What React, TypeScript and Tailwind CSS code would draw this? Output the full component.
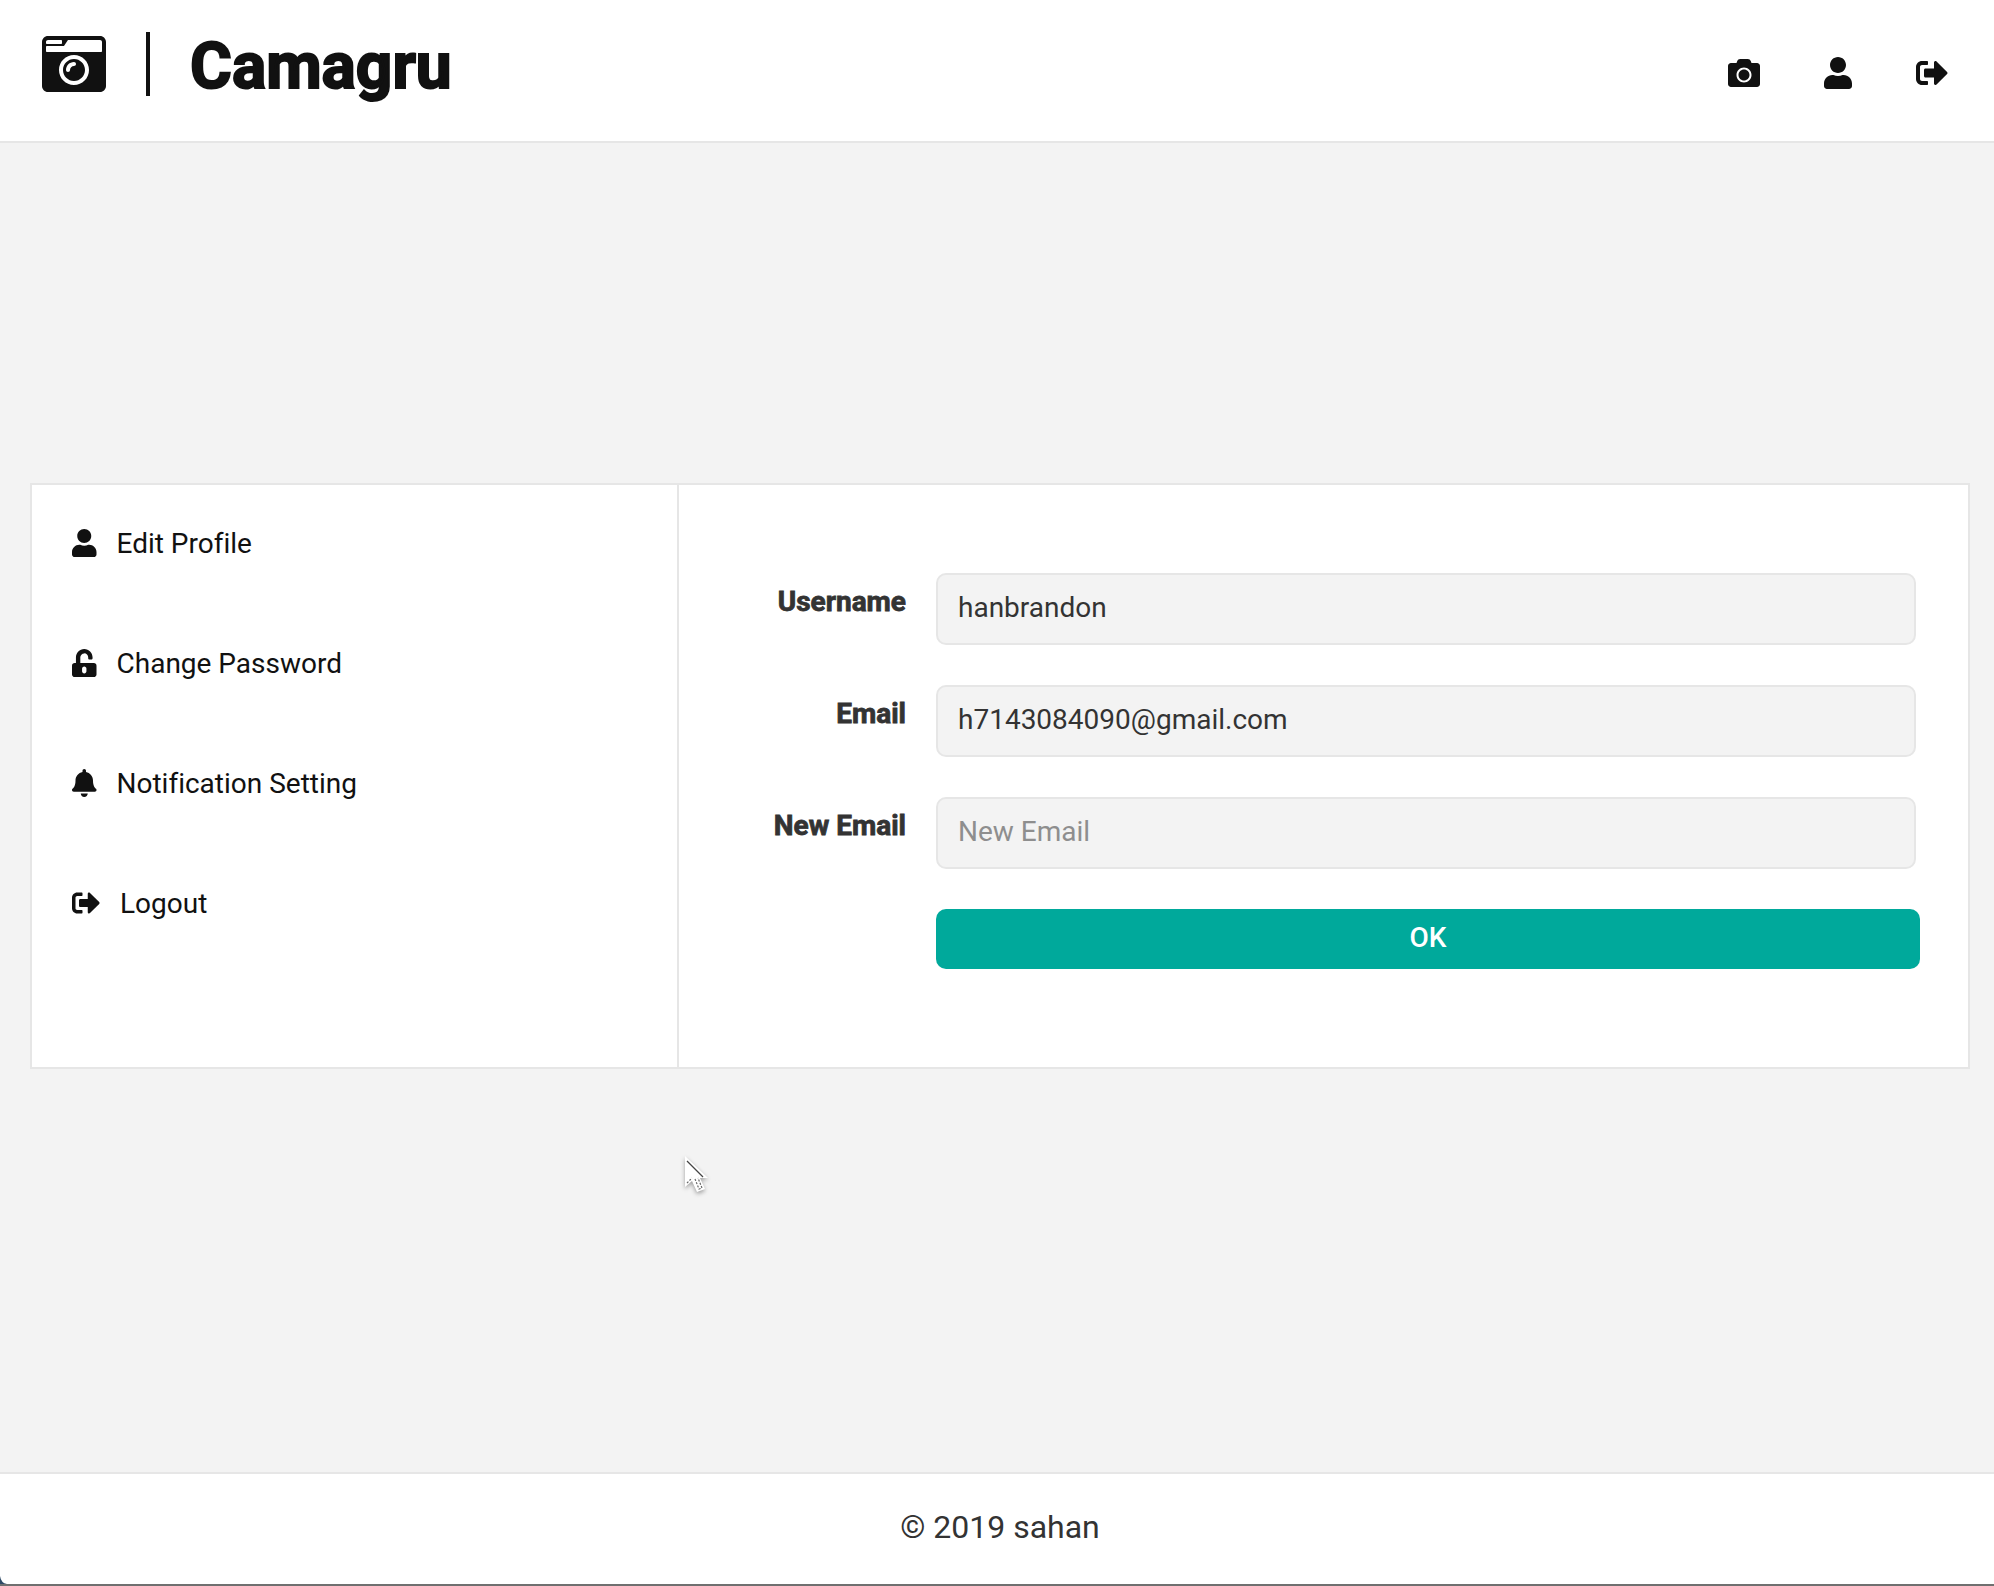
import type { ReactNode } from "react";
import { FaBell, FaCamera, FaCameraRetro, FaSignOutAlt, FaUnlockAlt, FaUser } from "react-icons/fa";

function Header() {
  return (
    <header className="flex h-[143px] shrink-0 items-start justify-between border-b-2 border-[#e6e6e6] bg-white pt-8 pr-[46px] pl-[42px] text-[#111]">
      <a className="flex h-16 items-center">
        <FaCameraRetro className="size-16" />
        <span className="ml-10 h-16 w-1 bg-[#111]" />
        <h1 className="ml-10 pt-[5px] text-[64px] leading-[64px] font-bold [-webkit-text-stroke:2px_#111]">
          Camagru
        </h1>
      </a>
      <nav className="mt-[25px] flex items-center gap-16">
        <FaCamera className="size-8" />
        <FaUser className="h-8 w-7" />
        <FaSignOutAlt className="size-8" />
      </nav>
    </header>
  );
}

function MenuItem({ icon, label }: { icon: ReactNode; label: string }) {
  return (
    <li className="flex h-[120px] items-start">
      <a className="flex h-8 items-center gap-5">
        {icon}
        <span className="pt-[2px]">{label}</span>
      </a>
    </li>
  );
}

function Field({ label, value, placeholder }: { label: string; value?: string; placeholder?: string }) {
  return (
    <div className="mb-10 flex h-[72px]">
      <label className="w-[227px] pt-[13px] text-right leading-8 font-bold [-webkit-text-stroke:0.8px_#333]">
        {label}
      </label>
      <input
        className="ml-[30px] h-[72px] w-[980px] rounded-[10px] border-2 border-[#e6e6e6] bg-[#f3f3f3] px-5 pb-[3px] text-[28px] outline-none placeholder:text-[#8e8e8e]"
        defaultValue={value}
        placeholder={placeholder}
      />
    </div>
  );
}

function Cursor() {
  return (
    <svg className="absolute top-[1150px] left-[678px]" width="40" height="50" viewBox="0 0 40 50">
      <g className="drop-shadow-[0_2px_2px_rgba(0,0,0,0.35)]">
        <path d="M7 6v31l7-6 5 11 8-3-5-11h8z" fill="#fff" />
      </g>
      <path d="M9 11l16 16" stroke="#444" strokeWidth="1.2" fill="none" />
      <path d="M9 33l5-5M17 29l4 10 3-1-4-10" stroke="#666" strokeWidth="1.2" strokeDasharray="2 1.5" fill="none" />
    </svg>
  );
}

export default function App() {
  return (
    <div className="relative flex h-[1586px] w-[1994px] flex-col overflow-hidden bg-[#f3f3f3] font-['Roboto',sans-serif] text-[28px] text-[#333] [font-variant-ligatures:none]">
      <Header />
      <main className="flex flex-1 pt-[340px] pl-[30px]">
        <section className="flex h-[586px] w-[1940px] border-2 border-[#e6e6e6] bg-white">
          <ul className="w-[647px] border-r-2 border-[#e6e6e6] pt-[42px] pl-10 text-[#111]">
            <MenuItem icon={<FaUser className="h-7 w-[24.5px]" />} label="Edit Profile" />
            <MenuItem icon={<FaUnlockAlt className="h-7 w-[24.5px]" />} label="Change Password" />
            <MenuItem icon={<FaBell className="h-7 w-[24.5px]" />} label="Notification Setting" />
            <MenuItem icon={<FaSignOutAlt className="size-7" />} label="Logout" />
          </ul>
          <form className="flex-1 pt-[88px]">
            <Field label="Username" value="hanbrandon" />
            <Field label="Email" value="h7143084090@gmail.com" />
            <Field label="New Email" placeholder="New Email" />
            <button
              type="button"
              className="ml-[257px] block h-[60px] w-[984px] rounded-[10px] bg-[#00a99b] pb-[2px] font-medium text-white"
            >
              OK
            </button>
          </form>
        </section>
      </main>
      <footer className="flex h-[114px] shrink-0 flex-col border-t-2 border-b-2 border-t-[#e6e6e6] border-b-[#6f6f6f] bg-white pt-[34px] pl-[6px] text-center text-[32px] leading-[38px]">
        © 2019 sahan
      </footer>
      <svg className="absolute bottom-[2px] left-0" width="7" height="8" viewBox="0 0 7 8">
        <path d="M0 0q1 7 7 8H0z" fill="#2f4a66" />
      </svg>
      <Cursor />
    </div>
  );
}
